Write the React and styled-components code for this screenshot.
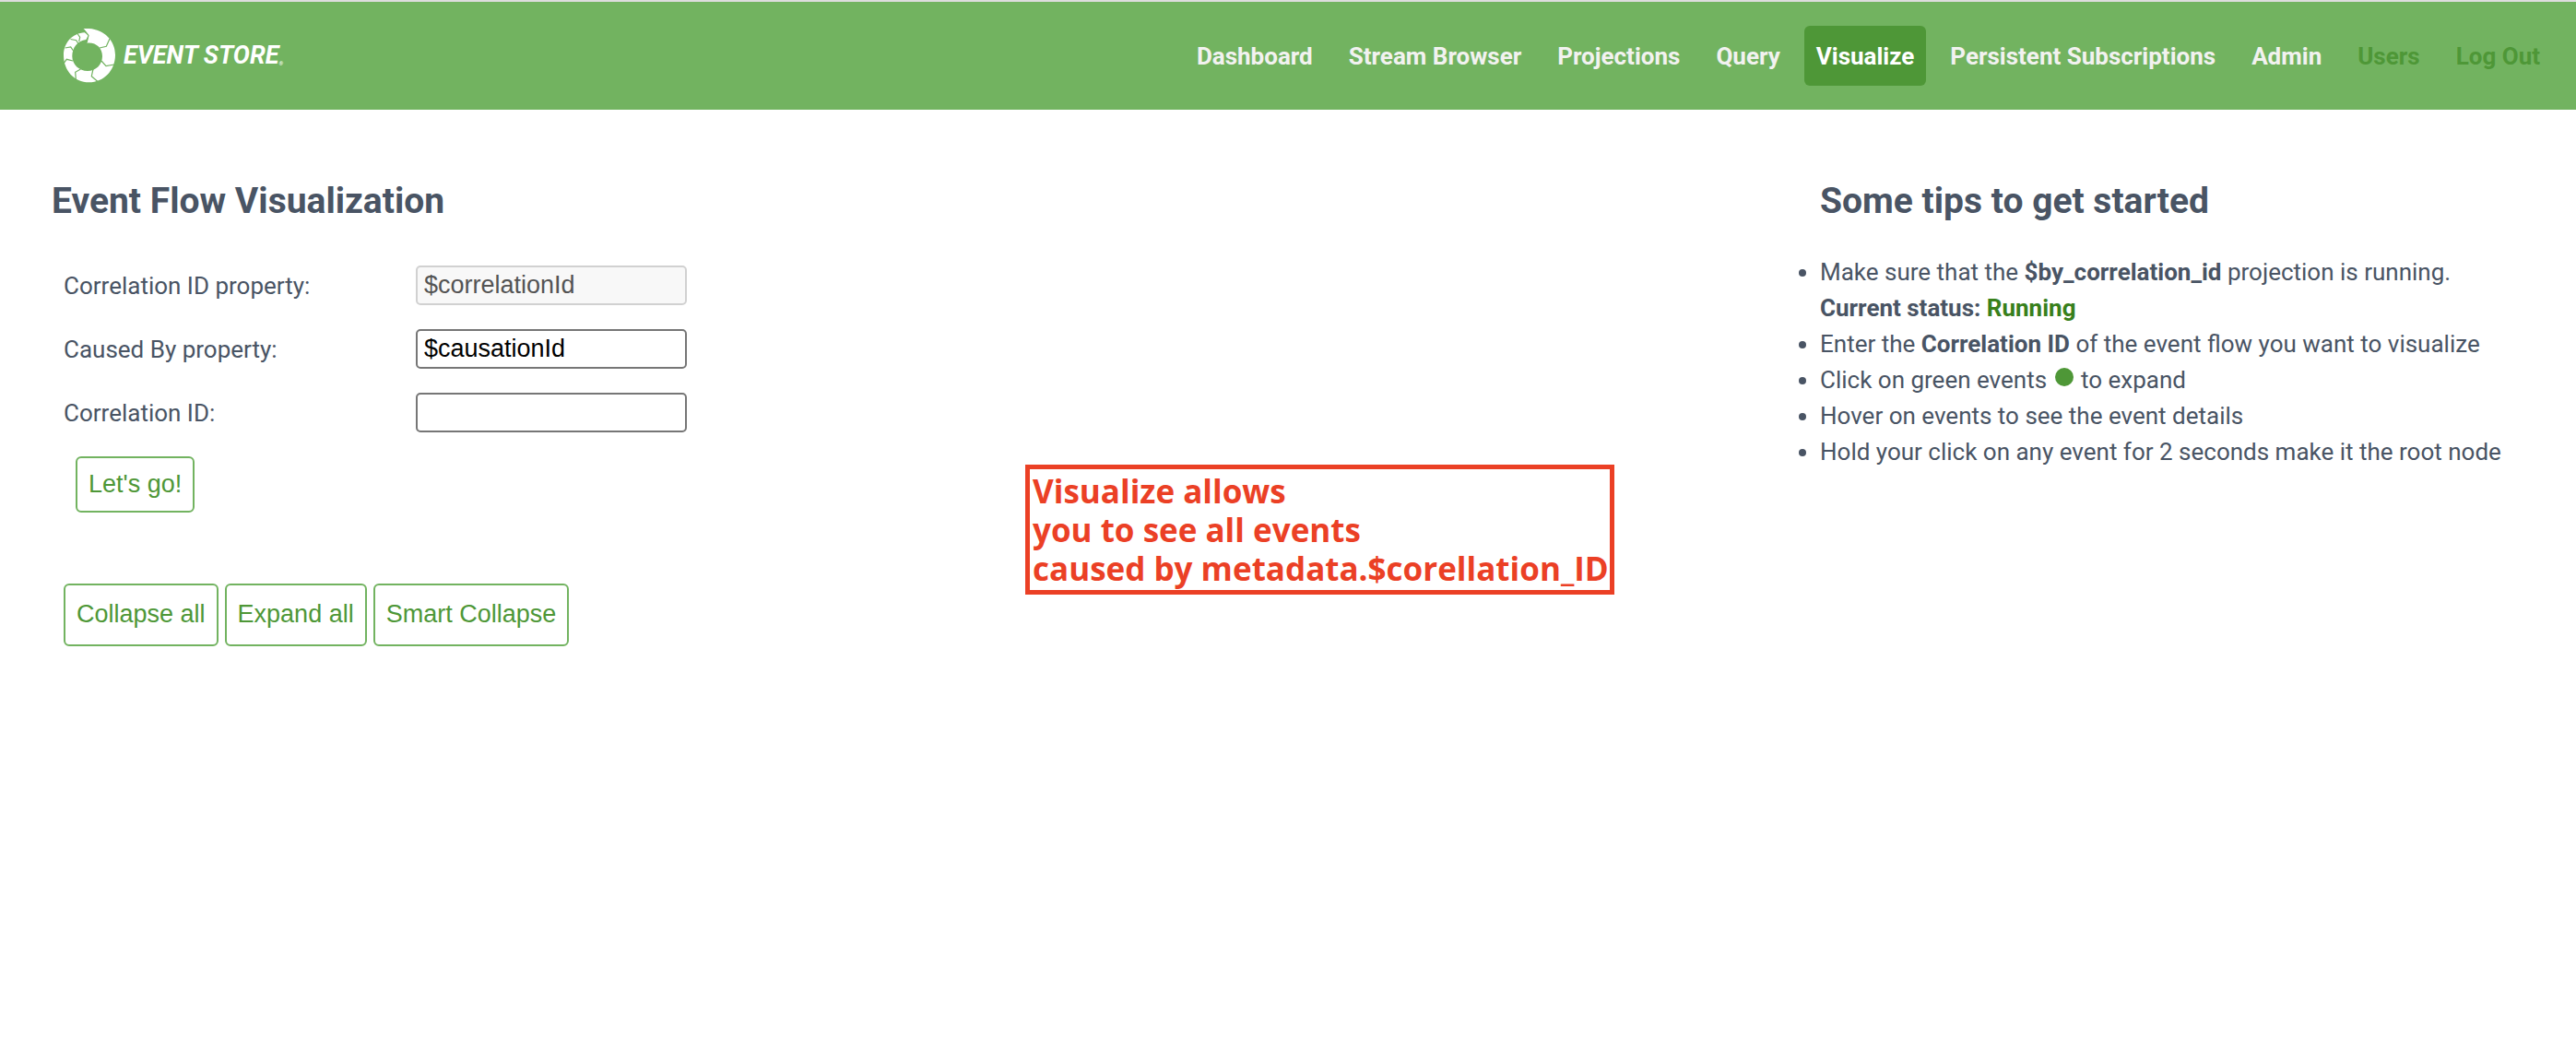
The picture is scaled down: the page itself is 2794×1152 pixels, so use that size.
import React from "react";
import styled, { createGlobalStyle } from "styled-components";

const GlobalStyle = createGlobalStyle`
  * { box-sizing: border-box; }
  body {
    margin: 0;
    background: #fff;
    color: #495464;
    font-family: Roboto, "Liberation Sans", sans-serif;
    font-size: 26px;
    line-height: 39px;
  }
`;

const Header = styled.header`
  display: flex;
  align-items: center;
  justify-content: space-between;
  min-height: 119px;
  padding: 0 26px 0 68px;
  border-top: 2px solid #ddd;
  background: #72b360;
`;

const Brand = styled.a`
  display: flex;
  align-items: center;
  gap: 8px;
  color: #fff;
  text-decoration: none;
`;

const BrandMark = styled.svg`
  width: 58px;
  height: 60px;
`;

const BrandName = styled.span`
  display: flex;
  align-items: flex-end;
  font: italic 700 27px/39px Roboto, "Liberation Sans", sans-serif;
`;

const Registered = styled.small`
  padding-bottom: 8px;
  font-size: 6px;
  line-height: 6px;
`;

const Nav = styled.nav`
  display: flex;
  gap: 13px;
`;

const NavLink = styled.a`
  padding: 14px 13px 12px;
  border-radius: 6px;
  color: ${(p) => (p.$active ? "#fff" : p.$muted ? "#4e9737" : "#f2f2f0")};
  background: ${(p) => (p.$active ? "#4e9737" : "transparent")};
  font-weight: 700;
  text-decoration: none;
`;

const Main = styled.main`
  display: grid;
  grid-template-columns: 1056fr 862fr 764fr;
  align-items: start;
  padding: 69px 56px 0;
`;

const Title = styled.h2`
  margin: 0;
  font-size: 39px;
  line-height: 60px;
  font-weight: 700;
`;

const FlowPanel = styled.section`
  display: flex;
  flex-direction: column;
`;

const Form = styled.form`
  display: flex;
  flex-direction: column;
  align-items: flex-start;
  gap: 26px;
  padding: 40px 13px 0;
`;

const Field = styled.div`
  display: flex;
  align-items: center;
`;

const Label = styled.label`
  width: 382px;
  padding-top: 2px;
  line-height: 41px;
`;

const Input = styled.input`
  width: 294px;
  height: 43px;
  padding: 2px 7px;
  border: 2px solid #767676;
  border-radius: 5px;
  background: #fff;
  color: #000;
  font: 27px/30px "Liberation Sans", sans-serif;
  &:disabled {
    border-color: #d1d1d1;
    background: #f8f8f8;
    color: #545454;
  }
`;

const Button = styled.button`
  height: ${(p) => (p.$tall ? 68 : 61)}px;
  padding: 0 12px 2px;
  border: 2px solid #72b360;
  border-radius: 6px;
  background: #fff;
  color: #4e9737;
  font: 27px/30px "Liberation Sans", sans-serif;
`;

const SubmitRow = styled.div`
  display: flex;
  padding-left: 13px;
`;

const Actions = styled.div`
  display: flex;
  gap: 7px;
  padding: 77px 13px 0;
`;

const Note = styled.aside`
  justify-self: start;
  margin-top: 316px;
  padding: 3px 1px 2px 3px;
  border: 5px solid #eb4025;
  color: #eb4025;
  font: 700 35px/42px "Open Sans", sans-serif;
`;

const NoteLine = styled.div`
  white-space: nowrap;
`;

const Tips = styled.section``;

const TipList = styled.ul`
  margin: 28px 0 0;
  padding: 0;
`;

const Status = styled.strong`
  color: ${(p) => (p.$running ? "#38801c" : "inherit")};
`;

const EventDot = styled.span`
  display: inline-block;
  width: 20px;
  height: 20px;
  margin: 0 2px 2px;
  border-radius: 50%;
  background: #4e9737;
`;

const links = [
  { text: "Dashboard" },
  { text: "Stream Browser" },
  { text: "Projections" },
  { text: "Query" },
  { text: "Visualize", active: true },
  { text: "Persistent Subscriptions" },
  { text: "Admin" },
  { text: "Users", muted: true },
  { text: "Log Out", muted: true },
];

function Logo() {
  return (
    <BrandMark viewBox="0 0 58 60" aria-hidden="true">
      <path
        fill="#fff"
        d="M22.3 0C42-1.5 57 11 57 28.5C57 46 44 58.3 28.7 58.3C12 58.3 1 45 1 29C1 15 11 5 23.7 4.3L28 7.3L25.3 12C16 13 10.3 21 10.3 30C10.3 39 18 46 27 46C36 46 43 39 43 30C43 21 36 14.5 26 15.7L28 7.3Z"
      />
      <g fill="none" stroke="#72b360" strokeWidth="1.2">
        <path d="M51 11L47.3 19.3L40 21" />
        <path d="M56 39L47 40.7L42 35" />
        <path d="M38 57.5L31.3 51.7L33 44" />
        <path d="M14.3 55L13.7 47.3L19.5 44" />
        <path d="M0.5 38.5L4.3 33.3L11 35" />
        <path d="M2.5 21L8.7 20L11.5 24" />
        <path d="M8.5 11.5L14.7 12.7L17 16.5" />
        <path d="M16 5.5L18.7 9.3L17.7 14" />
        <path d="M22.3 0.5L28 7.3L26 15.5" />
      </g>
    </BrandMark>
  );
}

export default function App() {
  return (
    <>
      <GlobalStyle />
      <Header>
        <Brand href="#">
          <Logo />
          <BrandName>
            EVENT STORE<Registered>®</Registered>
          </BrandName>
        </Brand>
        <Nav>
          {links.map((l) => (
            <NavLink key={l.text} href="#" $active={l.active} $muted={l.muted}>
              {l.text}
            </NavLink>
          ))}
        </Nav>
      </Header>
      <Main>
        <FlowPanel>
          <Title>Event Flow Visualization</Title>
          <Form onSubmit={(e) => e.preventDefault()}>
            <Field>
              <Label htmlFor="correlation-property">Correlation ID property:</Label>
              <Input id="correlation-property" defaultValue="$correlationId" disabled />
            </Field>
            <Field>
              <Label htmlFor="caused-by-property">Caused By property:</Label>
              <Input id="caused-by-property" defaultValue="$causationId" />
            </Field>
            <Field>
              <Label htmlFor="correlation-id">Correlation ID:</Label>
              <Input id="correlation-id" />
            </Field>
            <SubmitRow>
              <Button type="submit">Let's go!</Button>
            </SubmitRow>
          </Form>
          <Actions>
            <Button type="button" $tall>Collapse all</Button>
            <Button type="button" $tall>Expand all</Button>
            <Button type="button" $tall>Smart Collapse</Button>
          </Actions>
        </FlowPanel>
        <Note>
          <NoteLine>Visualize allows</NoteLine>
          <NoteLine>you to see all events</NoteLine>
          <NoteLine>caused by metadata.$corellation_ID</NoteLine>
        </Note>
        <Tips>
          <Title>Some tips to get started</Title>
          <TipList>
            <li>
              Make sure that the <strong>$by_correlation_id</strong> projection is running.
              <br />
              <strong>Current status: </strong>
              <Status $running>Running</Status>
            </li>
            <li>
              Enter the <strong>Correlation ID</strong> of the event flow you want to visualize
            </li>
            <li>
              Click on green events <EventDot /> to expand
            </li>
            <li>Hover on events to see the event details</li>
            <li>Hold your click on any event for 2 seconds make it the root node</li>
          </TipList>
        </Tips>
      </Main>
    </>
  );
}
